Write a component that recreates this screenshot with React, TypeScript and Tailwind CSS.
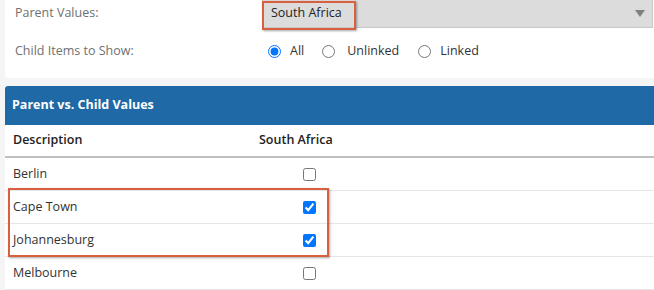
import React from "react";

const rows = [
  { name: "Berlin", checked: false },
  { name: "Cape Town", checked: true },
  { name: "Johannesburg", checked: true },
  { name: "Melbourne", checked: false },
];

export default function App() {
  return (
    <div className="w-[654px] h-[290px] overflow-hidden bg-[#f5f5f5] font-['Open_Sans',sans-serif] text-[12.5px] text-[#333]">
      <div className="ml-[5px] w-[660px]">

        {/* Filters */}
        <div className="relative bg-white rounded-bl-[4px] h-[78px] pl-[10px]">
          <div className="flex items-center h-[28px]">
            <div className="w-[247px] -mt-[2px] text-[#707070]">Parent Values:</div>
            <div className="flex items-center w-[391px] h-[28px] bg-[#dcdcdc] border border-[#c8c8c8] border-t-0 pl-[8px] pr-[7px]">
              <span className="flex-1 text-[#222]">South Africa</span>
              <svg width="10" height="7" viewBox="0 0 10 7">
                <path d="M0 0 H10 L5 7 Z" fill="#808080" />
              </svg>
            </div>
          </div>
          <div className="flex items-center h-[46px]">
            <div className="w-[253px] text-[#707070]">Child Items to Show:</div>
            <label className="flex items-center gap-[9px]">
              <input type="radio" name="show" defaultChecked className="m-0 w-[13px] h-[13px]" />
              <span>All</span>
            </label>
            <label className="flex items-center gap-[12px] ml-[18px]">
              <input type="radio" name="show" className="m-0 w-[13px] h-[13px]" />
              <span>Unlinked</span>
            </label>
            <label className="flex items-center gap-[9px] ml-[19px]">
              <input type="radio" name="show" className="m-0 w-[13px] h-[13px]" />
              <span>Linked</span>
            </label>
          </div>

          {/* highlight around selected parent */}
          <div className="absolute left-[257px] top-[1px] w-[94px] h-[29px] border-2 border-[#d6603f] shadow-[1px_1px_2px_rgba(0,0,0,0.35)]" />
        </div>

        {/* Table */}
        <div className="relative mt-[8px] bg-white">
          <div className="flex items-center h-[39px] bg-[#1f69a6] rounded-t-[3px] pl-[7px] text-white font-bold">
            Parent vs. Child Values
          </div>
          <div className="flex items-center h-[33px] border-b-2 border-[#c0c0c0] pl-[8px] font-semibold text-[#222]">
            <div className="w-[246px]">Description</div>
            <div>South Africa</div>
          </div>
          {rows.map((r) => (
            <div key={r.name} className="flex items-center h-[33px] border-b border-[#e6e6e6] pl-[8px]">
              <div className="w-[290px]">{r.name}</div>
              <input type="checkbox" defaultChecked={r.checked} className="m-0 w-[13px] h-[13px]" />
            </div>
          ))}

          {/* highlight around linked rows */}
          <div className="absolute left-[3px] top-[102px] w-[321px] h-[69px] border-2 border-[#d6603f] shadow-[1px_1px_2px_rgba(0,0,0,0.35)]" />
        </div>
      </div>
    </div>
  );
}
